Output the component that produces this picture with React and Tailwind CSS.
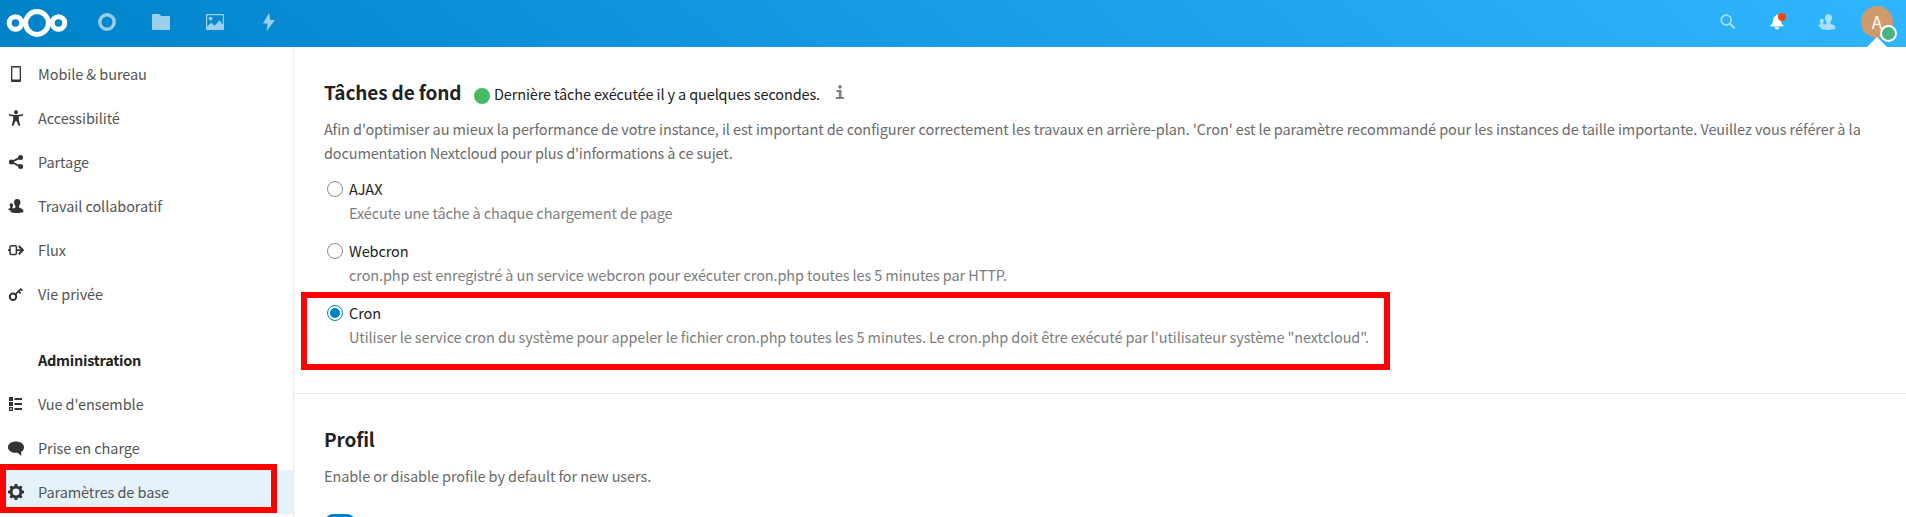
import React from "react";

const ICONS = {
  phone: (
    <path fillRule="evenodd" d="M4.3 0h7.4C12.500 0 13 .5 13 1.300v13.400c0 .8-.5 1.300-1.300 1.300H4.300C3.500 16 3 15.500 3 14.700V1.300C3 .5 3.500 0 4.300 0zM4.300 1.400V13.400h7.400V1.400z" />
  ),
  accessibility: (
    <>
      <circle cx="8" cy="2.200" r="2" />
      <path d="M1.100 4.100 6 5h4l4.900-.9.2 1.500-4.300 1v3.200l1.500 5.700-1.400.5L8.400 11h-.8l-2.500 5-1.400-.5 1.500-5.700V6.600l-4.300-1z" />
    </>
  ),
  share: (
    <>
      <circle cx="3.400" cy="8" r="2.500" />
      <circle cx="12.600" cy="3.400" r="2.500" />
      <circle cx="12.600" cy="12.600" r="2.500" />
      <path d="M12.600 3.400 3.400 8l9.200 4.600" fill="none" stroke="currentColor" strokeWidth="1.800" />
    </>
  ),
  contacts: (
    <path d="M9.200 1C7.200 1 6.100 2.300 6.100 4c0 1.500.4 3 1.300 3.900.1.700.1 1.200 0 1.700-.8.300-1.500.5-2 .9-.3-.3-.6-.5-.9-.6v-1c.5-.5.6-1.100.6-1.900 0-1.100-.6-1.800-1.700-1.800S1.700 5.900 1.700 7c0 .8.200 1.400.6 1.900v1C1.200 10.200.600 10.500.500 11.200L.400 12.300h2.400c-.4.700-.4 1.300-.3 1.700C4 14.700 6.200 15 8.900 15s5-.3 6.600-1c.1-2.200-.7-3-2.200-3.600-.8-.3-1.500-.5-2.200-.8-.1-.5-.1-1 0-1.700.9-.9 1.300-2.400 1.300-3.900 0-1.700-1.200-3-3.200-3z" />
  ),
  flow: (
    <>
      <rect x="2" y="3.700" width="6.400" height="8.800" rx="1.200" fill="none" stroke="currentColor" strokeWidth="1.500" />
      <path d="M0 7.200h2v1.800H0zM9 7.200h5v1.800H9z" />
      <path d="m10.800 4 4 4.100-4 4.100" fill="none" stroke="currentColor" strokeWidth="2.100" />
    </>
  ),
  key: (
    <>
      <circle cx="5" cy="10.800" r="3.200" fill="none" stroke="currentColor" strokeWidth="2" />
      <path d="m7.200 8.600 6-6M10.600 5.200l2.200 2.200M12.800 3l1.700 1.700" fill="none" stroke="currentColor" strokeWidth="1.700" />
    </>
  ),
  overview: (
    <path fillRule="evenodd" d="M1 1h4v4H1zM6.500 2H14v2H6.500zM1 6h4v4H1zM6.500 7H14v2H6.500zM1 11h4v4H1zm1.200 1.200v1.600h1.600v-1.600zM6.500 12H14v2H6.500z" />
  ),
  comment: (
    <path d="M8 1.500c4.500 0 8 2.300 8 5.700 0 2-1.100 3.500-2.900 4.500L13.300 16l-3.700-3.300c-.5.100-1 .1-1.600.1-4.500 0-8-2.200-8-5.600s3.500-5.700 8-5.700z" />
  ),
  gear: (
    <>
      <circle cx="8" cy="8" r="4.900" fill="none" stroke="currentColor" strokeWidth="2.900" />
      <path d="M6.700 0h2.600l.4 3H6.300zM6.700 16h2.600l.4-3H6.300zM0 6.700v2.600l3 .4V6.300zM16 6.700v2.600l-3 .4V6.300zM1.500 3.300l1.800-1.800 2.400 1.800-2.400 2.400zM14.500 3.300l-1.800-1.800-2.400 1.800 2.400 2.400zM1.500 12.700l1.800 1.800 2.400-1.800-2.400-2.400zM14.500 12.700l-1.800 1.800-2.400-1.800 2.400-2.400z" />
    </>
  ),
};

function Icon({ name, className }) {
  return (
    <svg viewBox="0 0 16 16" fill="currentColor" className={className}>
      {ICONS[name]}
    </svg>
  );
}

function NavItem({ icon, label, active }) {
  return (
    <a className={`flex h-11 items-center pl-2 ${active ? "bg-[#e5f2fa]" : ""}`}>
      <Icon name={icon} className="size-4 text-[#333]" />
      <span className="ml-[14px] leading-[44px] tracking-[-0.080px] text-[#555]">{label}</span>
    </a>
  );
}

function Option({ label, hint, checked }) {
  return (
    <div className="flex h-[62px]">
      <span
        className={`mt-1 ml-[3px] flex size-4 items-center justify-center rounded-full border ${
          checked ? "border-[#0082c9]" : "border-[#8a8a8a]"
        }`}
      >
        {checked && <span className="size-2.5 rounded-full bg-[#0082c9]" />}
      </span>
      <div className="ml-1.5">
        <div className="text-[#222]">{label}</div>
        <div className="tracking-[-0.108px] text-[#7d7d7d]">{hint}</div>
      </div>
    </div>
  );
}

function Header() {
  return (
    <header className="flex h-[47px] items-center bg-[linear-gradient(40deg,#0082c9_0%,#30b6ff_100%)] text-white">
      <svg viewBox="0 0 62 30" className="mb-[2px] ml-1.5 h-[30px] w-[62px]" fill="none" stroke="white" strokeWidth="5">
        <circle cx="9.500" cy="15" r="6.300" />
        <circle cx="31" cy="15" r="11.400" />
        <circle cx="52.500" cy="15" r="6.300" />
      </svg>
      <nav className="mb-[3px] ml-[30px] flex items-center gap-9 opacity-60">
        <svg viewBox="0 0 18 18" className="size-[18px]">
          <circle cx="9" cy="9" r="7.200" fill="none" stroke="white" strokeWidth="3.400" />
        </svg>
        <svg viewBox="0 0 18 18" className="size-[18px]" fill="white">
          <path d="M.8 1h6.400l2 2H17c.6 0 1 .4 1 1v12c0 .6-.4 1-1 1H1c-.6 0-1-.4-1-1V1.800C0 1.300.300 1 .8 1z" />
        </svg>
        <svg viewBox="0 0 18 18" className="size-[18px]" fill="white">
          <path fillRule="evenodd" d="M.6 1h16.800c.3 0 .6.300.6.600v14.800c0 .3-.3.600-.6.600H.6c-.3 0-.6-.3-.6-.6V1.600C0 1.300.300 1 .6 1zM1.200 2.200v11.300L5.300 9.600l3.200 3.200 5-5.500 3.300 4.400V2.200z" />
          <circle cx="4.600" cy="5.600" r="1.900" />
        </svg>
        <svg viewBox="0 0 18 18" className="size-[18px]" fill="white">
          <path d="M9 0 3 10.500h4.600L6.600 18 15 7h-4.800z" />
        </svg>
      </nav>
      <div className="mb-[3px] ml-auto flex items-center">
        <svg viewBox="0 0 16 16" className="mr-[34px] size-4 opacity-60" fill="none" stroke="white">
          <circle cx="6.200" cy="6" r="4.900" strokeWidth="1.700" />
          <path d="m9.700 9.500 5 5" strokeWidth="2.200" />
        </svg>
        <svg viewBox="0 0 18 18" className="mr-[30px] size-[18px]">
          <path fill="white" d="M7 1.500c-.8 0-1 .5-1 1.300C4 3.500 3.300 5.200 3.100 7.500 2.900 10 2.500 10.800.700 12.100V13.500h12.600v-1.400c-1.800-1.300-2.200-2.100-2.400-4.600C10.700 5.200 10 3.500 8 2.800c0-.8-.2-1.300-1-1.300zM4.600 14.300C4.900 15.800 5.800 16.500 7 16.500s2.100-.7 2.400-2.200z" />
          <circle cx="12" cy="4" r="4" fill="#ff4402" />
        </svg>
        <Icon name="contacts" className="mr-[25px] size-[18px] opacity-60" />
        <div className="relative flex size-8 items-center justify-center rounded-full bg-[#cf9b6b] text-[17px] leading-8">
          A
          <svg viewBox="0 0 20 10" className="absolute top-[31px] left-1.5 h-2.5 w-5" fill="white">
            <path d="M10 0l10 10H0z" />
          </svg>
          <span className="absolute top-[19px] left-[19px] size-[17px] rounded-full border-2 border-white bg-[#49b382]" />
        </div>
        <span className="w-[13px]" />
      </div>
    </header>
  );
}

export default function App() {
  return (
    <div className="relative flex h-[517px] w-full flex-col overflow-hidden bg-white font-['Noto_Sans_CJK_SC','Noto_Sans',sans-serif] text-[14.500px] leading-6 whitespace-nowrap">
      <Header />
      <div className="flex min-h-0 flex-1">
        <aside className="w-[294px] shrink-0 border-r border-[#ebebeb] pt-[5px]">
          <NavItem icon="phone" label="Mobile & bureau" />
          <NavItem icon="accessibility" label="Accessibilité" />
          <NavItem icon="share" label="Partage" />
          <NavItem icon="contacts" label="Travail collaboratif" />
          <NavItem icon="flow" label="Flux" />
          <NavItem icon="key" label="Vie privée" />
          <h2 className="mt-[22px] h-11 pl-[38px] leading-[44px] font-bold tracking-[-0.260px] text-[#222]">Administration</h2>
          <NavItem icon="overview" label="Vue d'ensemble" />
          <NavItem icon="comment" label="Prise en charge" />
          <NavItem icon="gear" label="Paramètres de base" active />
        </aside>

        <main className="flex-1 tracking-[-0.100px]">
          <section className="h-[347px] border-b border-[#ebebeb] pt-[30px] pl-[30px]">
            <div className="flex h-[30px] items-center">
              <h2 className="w-[137px] text-[19px] leading-[30px] font-bold tracking-[-0.150px] text-[#222]">Tâches de fond</h2>
              <span className="mt-2 ml-[13px] size-4 rounded-full bg-[#46ba61]" />
              <span className="mt-[4px] ml-1 tracking-[-0.130px] text-[#222]">Dernière tâche exécutée il y a quelques secondes.</span>
              <svg viewBox="0 0 8 14" className="ml-4 h-[14px] w-2" fill="#7f7f7f">
                <circle cx="4" cy="1.900" r="1.800" />
                <path d="M.5 5h5v7H8v2H0v-2h2.800V7H.5z" />
              </svg>
            </div>
            <p className="mt-2.5 text-[#6b6b6b]">
              <span className="tracking-[-0.087px]">
                Afin d'optimiser au mieux la performance de votre instance, il est important de configurer correctement les travaux en arrière-plan. 'Cron' est le paramètre recommandé pour les instances de taille importante. Veuillez vous référer à la
              </span>
              <br />
              <span className="tracking-[-0.140px]">documentation Nextcloud pour plus d'informations à ce sujet.</span>
            </p>
            <div className="mt-3">
              <Option label="AJAX" hint="Exécute une tâche à chaque chargement de page" />
              <Option label="Webcron" hint="cron.php est enregistré à un service webcron pour exécuter cron.php toutes les 5 minutes par HTTP." />
              <Option
                label="Cron"
                hint={'Utiliser le service cron du système pour appeler le fichier cron.php toutes les 5 minutes. Le cron.php doit être exécuté par l\'utilisateur système "nextcloud".'}
                checked
              />
            </div>
          </section>
          <section className="pt-[30px] pl-[30px]">
            <h2 className="text-[19px] leading-[30px] font-bold tracking-[-0.100px] text-[#222]">Profil</h2>
            <p className="mt-2.5 text-[#6b6b6b]">Enable or disable profile by default for new users.</p>
            <div className="mt-[22px] flex">
              <span className="mt-1 ml-[1px] h-4 w-[30px] rounded-full bg-[#0082c9]" />
              <span className="ml-1.5 text-[#222]">Activer</span>
            </div>
          </section>
        </main>
      </div>

      <div className="absolute top-[464px] left-0 h-[49px] w-[277px] border-6 border-[#f00]" />
      <div className="absolute top-[292px] left-[301px] h-[78px] w-[1089px] border-6 border-[#f00]" />
    </div>
  );
}
